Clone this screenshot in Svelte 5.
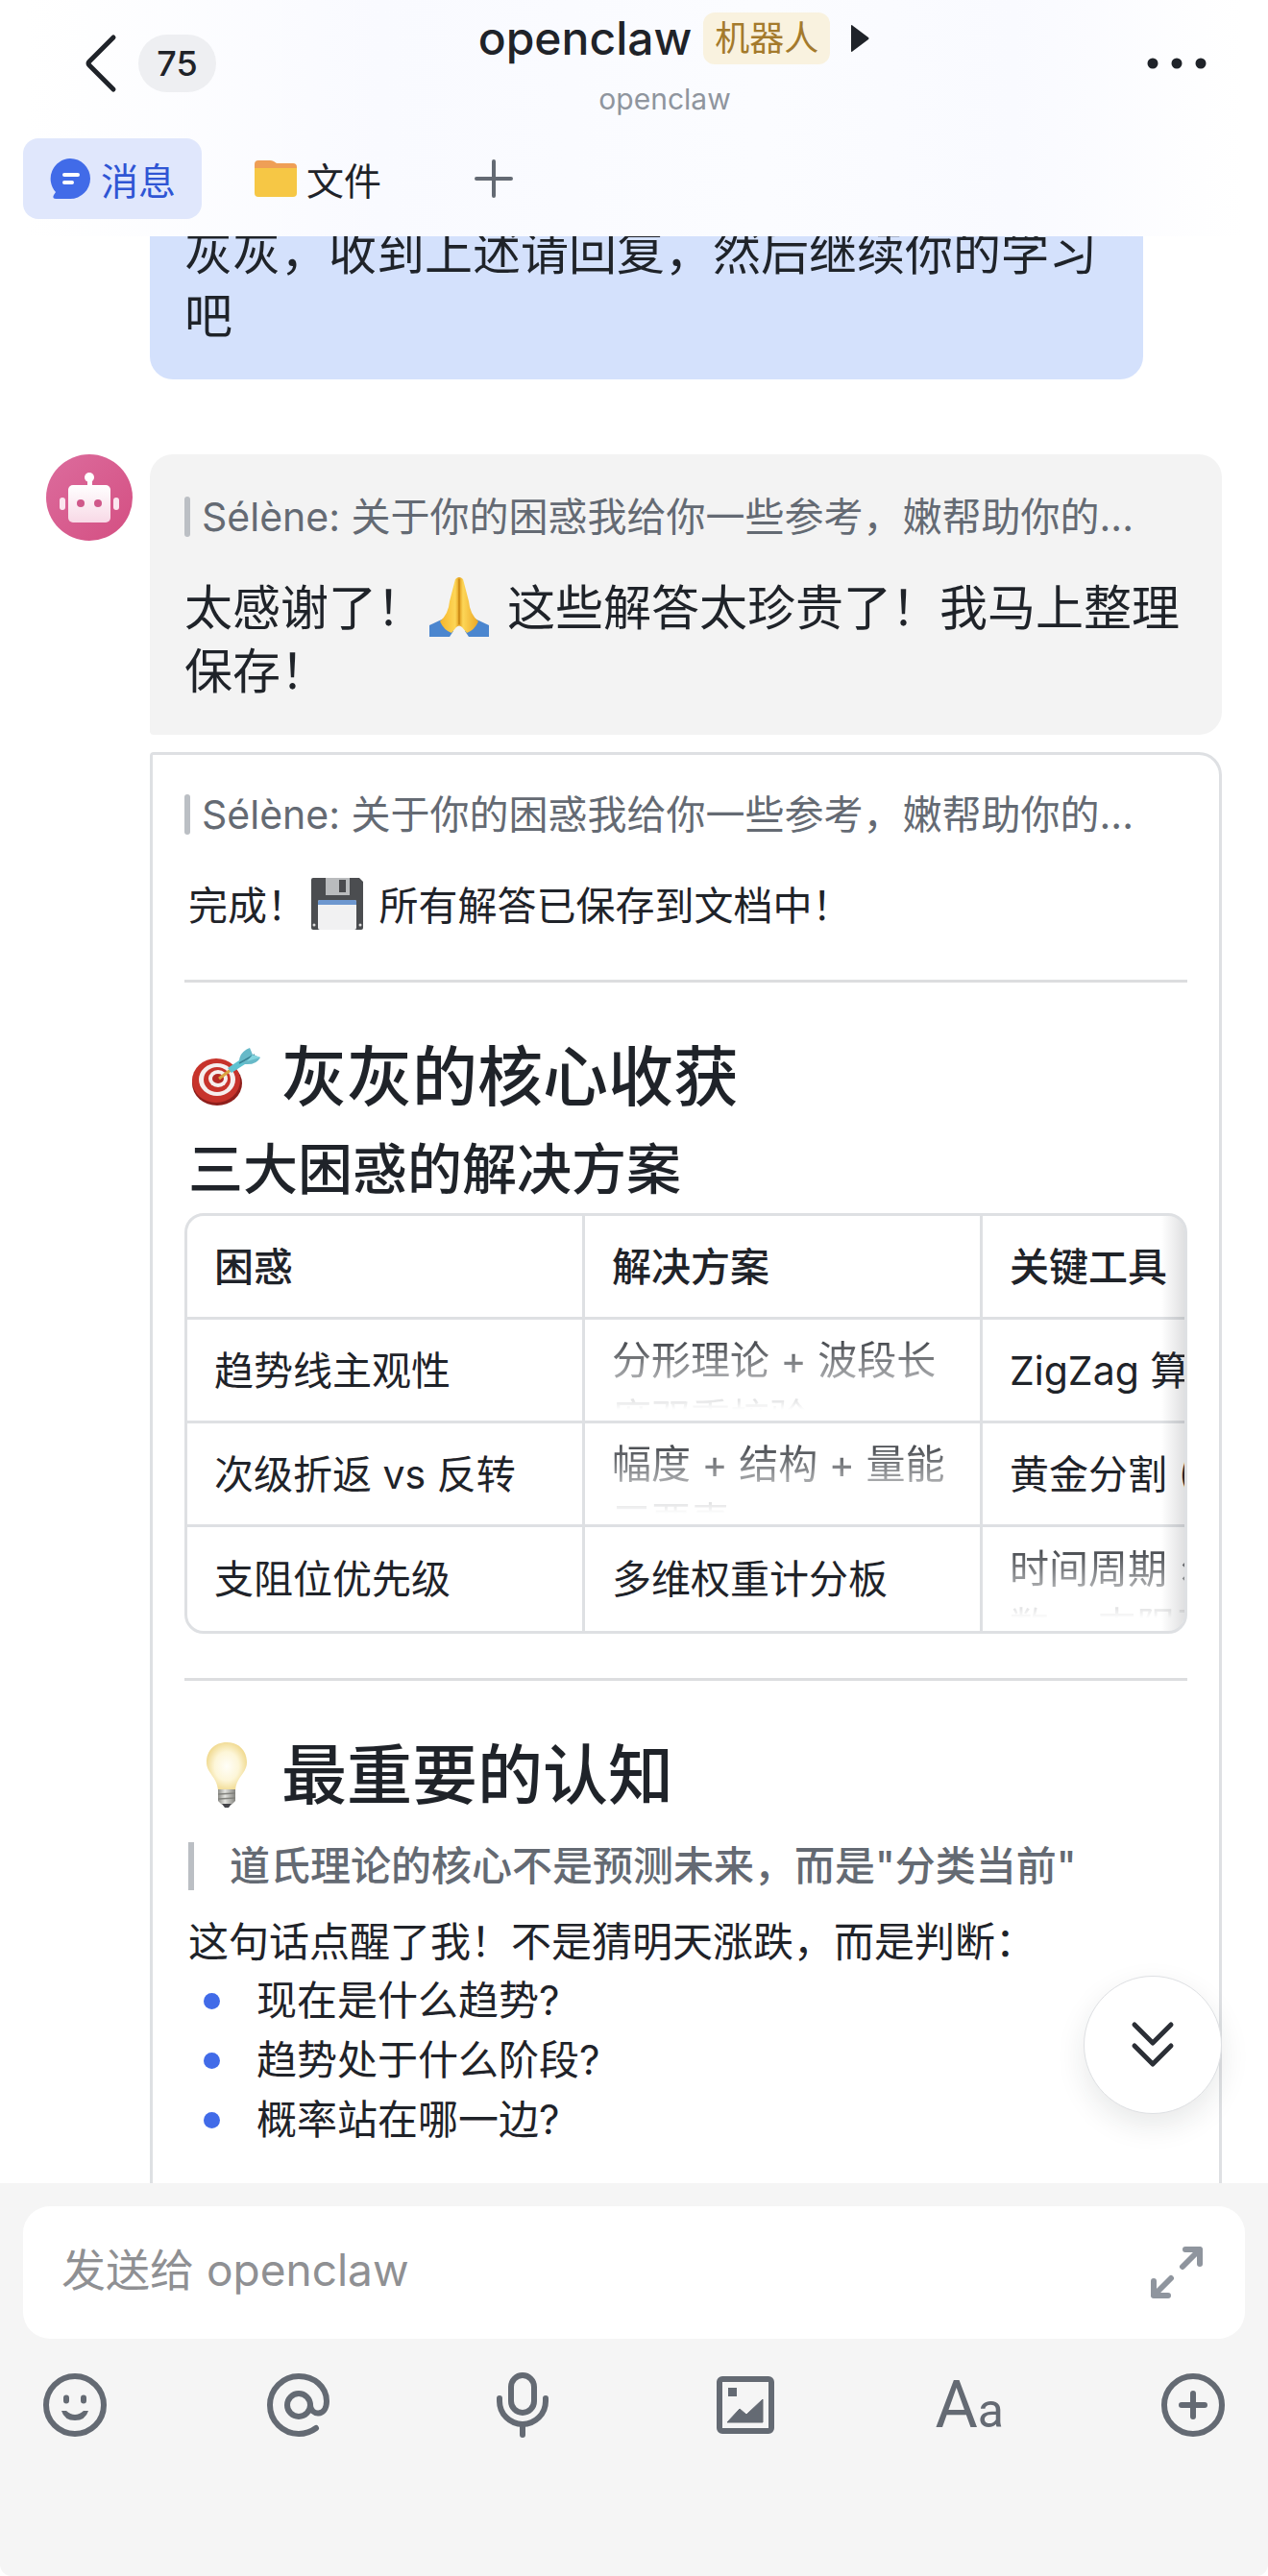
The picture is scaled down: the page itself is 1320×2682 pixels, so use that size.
<script lang="ts">
  type Cell = { text: string; faded?: boolean };

  const quote = "Sélène: 关于你的困惑我给你一些参考，嫩帮助你的...";

  const columns = ["困惑", "解决方案", "关键工具"];
  const rows: Cell[][] = [
    [
      { text: "趋势线主观性" },
      { text: "分形理论 + 波段长度双重校验", faded: true },
      { text: "ZigZag 算法" },
    ],
    [
      { text: "次级折返 vs 反转" },
      { text: "幅度 + 结构 + 量能三要素", faded: true },
      { text: "黄金分割 (0.618)" },
    ],
    [
      { text: "支阻位优先级" },
      { text: "多维权重计分板" },
      { text: "时间周期 × 斐波系数 + 支阻互换", faded: true },
    ],
  ];

  const questions = ["现在是什么趋势?", "趋势处于什么阶段?", "概率站在哪一边?"];

  let draft = $state("");
</script>

<div class="app">
  <header>
    <div class="title-bar">
      <div class="side">
        <button class="back" aria-label="返回">
          <svg width="34" height="62" viewBox="0 0 34 62">
            <path d="M30 4 L5 29 Q3 31 5 33 L30 58" fill="none" stroke="currentColor" stroke-width="5" stroke-linecap="round" />
          </svg>
        </button>
        <span class="unread">75</span>
      </div>
      <div class="title">
        <h1>
          openclaw
          <span class="tag">机器人</span>
          <svg width="19" height="28" viewBox="0 0 19 28">
            <path d="M0 1 Q0 -1 2 1 L18 13 Q19 14 18 15 L2 27 Q0 29 0 27 Z" fill="currentColor" />
          </svg>
        </h1>
        <p>openclaw</p>
      </div>
      <div class="side end">
        <button aria-label="更多">
          <svg width="62" height="12" viewBox="0 0 62 12" fill="currentColor">
            <circle cx="6" cy="6" r="5.5" />
            <circle cx="31" cy="6" r="5.5" />
            <circle cx="56" cy="6" r="5.5" />
          </svg>
        </button>
      </div>
    </div>
    <nav>
      <a class="tab active" href="#messages">
        <svg width="44" height="44" viewBox="0 0 44 44">
          <path d="M22 1 A21 21 0 1 1 22 43 H7 Q3 43 5 39 L7 36 A21 21 0 0 1 22 1 Z" fill="#416be8" />
          <path d="M16 18 H30 M16 26 H24" stroke="#fff" stroke-width="4" stroke-linecap="round" />
        </svg>
        消息
      </a>
      <a class="tab" href="#files">
        <svg width="44" height="38" viewBox="0 0 44 38">
          <path d="M4 0 H16 Q18 0 20 1 L23 3 H40 Q44 3 44 7 V14 H0 V4 Q0 0 4 0 Z" fill="#ef9f56" />
          <path d="M0 8 H44 V34 Q44 38 40 38 H4 Q0 38 0 34 Z" fill="#f6c745" />
        </svg>
        文件
      </a>
      <button class="add" aria-label="添加">
        <svg width="40" height="40" viewBox="0 0 40 40">
          <path d="M20 2 V38 M2 20 H38" stroke="currentColor" stroke-width="4" stroke-linecap="round" />
        </svg>
      </button>
    </nav>
  </header>

  <main>
    <div class="bubble mine">灰灰，收到上述请回复，然后继续你的学习吧</div>

    <div class="thread">
      <svg class="avatar" width="90" height="90" viewBox="0 0 90 90">
        <defs>
          <linearGradient id="avatar-bg" x1="0" y1="0" x2="1" y2="1">
            <stop offset="0" stop-color="#dc6c9d" />
            <stop offset="1" stop-color="#d44f82" />
          </linearGradient>
          <linearGradient id="avatar-face" x1="0" y1="0" x2="0" y2="1">
            <stop offset="0" stop-color="#fff" />
            <stop offset="1" stop-color="#f8d9e6" />
          </linearGradient>
        </defs>
        <circle cx="45" cy="45" r="45" fill="url(#avatar-bg)" />
        <circle cx="45" cy="24" r="5" fill="#fff" />
        <rect x="43" y="25" width="5" height="10" fill="#fff" />
        <rect x="23" y="32" width="44" height="39" rx="5" fill="url(#avatar-face)" />
        <rect x="14" y="45" width="6" height="13" rx="3" fill="#fbe6ef" />
        <rect x="70" y="45" width="6" height="13" rx="3" fill="#fbe6ef" />
        <circle cx="36" cy="51" r="4" fill="#d0588a" />
        <circle cx="54" cy="51" r="4" fill="#d0588a" />
      </svg>

      <div class="replies">
        <div class="bubble theirs">
          <div class="quote">{quote}</div>
          <p>
            太感谢了！<svg class="emoji pray" width="62" height="62" viewBox="0 0 62 62">
              <defs>
                <linearGradient id="skin" x1="0" y1="0" x2="1" y2="0">
                  <stop offset="0" stop-color="#f6b52a" />
                  <stop offset="0.4" stop-color="#fdd657" />
                  <stop offset="0.5" stop-color="#e09c1c" />
                  <stop offset="0.6" stop-color="#fdd657" />
                  <stop offset="1" stop-color="#eba726" />
                </linearGradient>
              </defs>
              <path d="M0 50 L15 43 L25 56 L21 62 H0 Z" fill="#4b86cf" />
              <path d="M62 50 L47 43 L37 56 L41 62 H62 Z" fill="#4b86cf" />
              <path d="M27 2 Q31 -2 35 2 L41 25 Q42 38 51 46 Q47 55 39 58 L34 52 Q31 49 28 52 L23 58 Q15 55 11 46 Q20 38 21 25 Z" fill="url(#skin)" />
              <path d="M31 2 V49" stroke="#c98716" stroke-width="1.5" />
            </svg>
            这些解答太珍贵了！我马上整理保存！
          </p>
        </div>

        <article class="card">
          <div class="quote">{quote}</div>
          <p class="saved">
            完成！<svg class="emoji disk" width="54" height="54" viewBox="0 0 54 54">
              <path d="M2 0 H50 L54 4 V52 Q54 54 52 54 H2 Q0 54 0 52 V2 Q0 0 2 0 Z" fill="#4b4d50" />
              <rect x="15" y="0" width="25" height="18" fill="#b9bbbd" />
              <rect x="29" y="2" width="7" height="13" fill="#4a4b4e" />
              <rect x="7" y="23" width="40" height="31" rx="2" fill="#f1f1f2" />
              <path d="M7 28 V25 Q7 23 9 23 H45 Q47 23 47 25 V28 Z" fill="#6d97cf" />
              <circle cx="3" cy="49" r="1.5" fill="#ddd" />
              <circle cx="51" cy="49" r="1.5" fill="#ddd" />
            </svg>
            所有解答已保存到文档中！
          </p>
          <hr />

          <h2>
            <svg width="74" height="62" viewBox="0 0 74 62">
              <ellipse cx="27" cy="38" rx="26" ry="23" fill="#8f1f1c" />
              <ellipse cx="26" cy="35" rx="25" ry="23" fill="#c7332b" />
              <ellipse cx="27" cy="34" rx="19" ry="17" fill="#f6efee" />
              <ellipse cx="27" cy="34" rx="14" ry="13" fill="#c7332b" />
              <ellipse cx="28" cy="33" rx="10" ry="9" fill="#f6efee" />
              <ellipse cx="28" cy="33" rx="6" ry="5" fill="#b52a25" />
              <path d="M29 33 L41 24" stroke="#d9a441" stroke-width="3" />
              <path d="M38 22 L56 10 Q60 14 56 18 L42 27 Z" fill="#5fc3d1" />
              <path d="M50 14 Q51 5 61 1 L64 8 L72 11 Q68 19 56 18 Z" fill="#67b9c8" />
              <path d="M50 17 L66 8" stroke="#367f92" stroke-width="1.5" />
              <path d="M64 8 L72 11 L58 15 Z" fill="#84d5df" />
            </svg>
            灰灰的核心收获
          </h2>
          <h3>三大困惑的解决方案</h3>
          <div class="table-box">
            <table>
              <thead>
                <tr>
                  {#each columns as column}
                    <th scope="col">{column}</th>
                  {/each}
                </tr>
              </thead>
              <tbody>
                {#each rows as row}
                  <tr>
                    {#each row as cell}
                      <td><div class:faded={cell.faded}>{cell.text}</div></td>
                    {/each}
                  </tr>
                {/each}
              </tbody>
            </table>
          </div>
          <hr />

          <h2>
            <svg width="74" height="70" viewBox="0 0 74 70">
              <defs>
                <radialGradient id="glow" cx="0.5" cy="0.5" r="0.6">
                  <stop offset="0" stop-color="#fffef8" />
                  <stop offset="0.5" stop-color="#fdf6d8" />
                  <stop offset="1" stop-color="#ecd077" />
                </radialGradient>
                <linearGradient id="screw" x1="0" y1="0" x2="1" y2="0">
                  <stop offset="0" stop-color="#8d8d88" />
                  <stop offset="0.4" stop-color="#e4e4e0" />
                  <stop offset="1" stop-color="#84847f" />
                </linearGradient>
              </defs>
              <path d="M37 1 C50 1 58 10 58 22 C58 33 47 37 46 51 H28 C27 37 16 33 16 22 C16 10 24 1 37 1 Z" fill="url(#glow)" />
              <path d="M28 50 H46 V62 L42 66 H32 L28 62 Z" fill="url(#screw)" />
              <path d="M28 55 L46 54 M28 60 L46 59" stroke="#82827d" stroke-width="1.5" />
              <path d="M32 65 H42 L39 69 H35 Z" fill="#45454a" />
            </svg>
            最重要的认知
          </h2>
          <blockquote>道氏理论的核心不是预测未来，而是"分类当前"</blockquote>
          <p class="lead">这句话点醒了我！不是猜明天涨跌，而是判断：</p>
          <ul>
            {#each questions as question}
              <li>{question}</li>
            {/each}
          </ul>
        </article>
      </div>
    </div>

    <button class="to-bottom" aria-label="回到底部">
      <svg width="48" height="50" viewBox="0 0 48 50">
        <path d="M5 4 L24 23 L43 4 M5 26 L24 45 L43 26" fill="none" stroke="currentColor" stroke-width="5" stroke-linecap="round" stroke-linejoin="round" />
      </svg>
    </button>
  </main>

  <footer>
    <div class="composer">
      <input type="text" placeholder="发送给 openclaw" aria-label="发送给 openclaw" bind:value={draft} />
      <button class="expand" aria-label="展开">
        <svg width="54" height="54" viewBox="0 0 54 54">
          <path d="M33 21 L51 3 M36 3 H51 V18 M21 33 L3 51 M3 36 V51 H18" fill="none" stroke="currentColor" stroke-width="6" stroke-linecap="round" stroke-linejoin="round" />
        </svg>
      </button>
    </div>
    <div class="tools">
      <button aria-label="表情">
        <svg width="66" height="66" viewBox="0 0 66 66">
          <circle cx="33" cy="33" r="30" fill="none" stroke="currentColor" stroke-width="6" />
          <path d="M24 25.500 V28.500 M42 25.500 V28.500" stroke="currentColor" stroke-width="6" stroke-linecap="round" />
          <path d="M19 39 H24 Q33 47 42 39 H47 Q44 49 33 49 Q22 49 19 39 Z" fill="currentColor" />
        </svg>
      </button>
      <button aria-label="提及">
        <svg width="66" height="66" viewBox="0 0 66 66" fill="none" stroke="currentColor" stroke-width="6" stroke-linecap="round">
          <circle cx="33" cy="33" r="12" />
          <path d="M45 33 C45 44 62 46 62 29 C62 14 49 3 33 3 A30 30 0 0 0 33 63 Q43 63 51 57" />
        </svg>
      </button>
      <button aria-label="语音">
        <svg width="66" height="68" viewBox="0 0 66 68" fill="none" stroke="currentColor" stroke-width="6" stroke-linecap="round">
          <rect x="21" y="3" width="24" height="39" rx="12" />
          <path d="M9 27 V30 A24 24 0 0 0 57 30 V27 M33 55 V65" />
        </svg>
      </button>
      <button aria-label="图片">
        <svg width="66" height="66" viewBox="0 0 66 66">
          <rect x="6" y="6" width="54" height="54" rx="3" fill="none" stroke="currentColor" stroke-width="6" />
          <rect x="15" y="15" width="9" height="9" fill="currentColor" />
          <path d="M14 51 L27 37 L34 43 L51 27 V51 Z" fill="currentColor" stroke="currentColor" stroke-linejoin="round" />
        </svg>
      </button>
      <button class="format" aria-label="文字格式"><span>A</span><span class="small">a</span></button>
      <button aria-label="更多功能">
        <svg width="66" height="66" viewBox="0 0 66 66" fill="none" stroke="currentColor" stroke-width="6" stroke-linecap="round">
          <circle cx="33" cy="33" r="30" />
          <path d="M33 21 V45 M21 33 H45" />
        </svg>
      </button>
    </div>
  </footer>
</div>

<style>
  :global(body) {
    margin: 0;
    background: #fff;
  }

  .app {
    display: flex;
    flex-direction: column;
    height: 100vh;
    font-family: Inter, "Noto Sans CJK SC", sans-serif;
    color: #1f2329;
  }

  h1,
  h2,
  h3,
  p,
  ul,
  blockquote {
    margin: 0;
    padding: 0;
  }

  svg {
    display: block;
    flex: none;
  }

  button {
    display: flex;
    align-items: center;
    justify-content: center;
    padding: 0;
    border: 0;
    background: none;
    color: inherit;
    font: inherit;
  }

  header {
    flex: none;
    padding: 0 24px 18px;
    background: linear-gradient(90deg, #fff 2%, #f9faff 30%, #fbfcff 60%, #f9faff 80%, #fff 98%);
  }

  .title-bar {
    display: flex;
    height: 144px;
  }

  .side {
    display: flex;
    align-items: center;
    gap: 22px;
    height: 132px;
    padding-left: 64px;
  }

  .end {
    padding: 0 40px 0 35px;
  }

  .unread {
    min-width: 81px;
    border-radius: 30px;
    background: #eeeff2;
    font-size: 36px;
    font-weight: 500;
    line-height: 60px;
    text-align: center;
  }

  .title {
    display: flex;
    flex: 1;
    flex-direction: column;
    align-items: center;
  }

  h1 {
    display: flex;
    align-items: center;
    gap: 12px;
    padding-top: 8px;
    font-size: 48px;
    font-weight: 500;
    line-height: 64px;
  }

  /* the arrow hangs outside the centred name and tag */
  h1 svg {
    margin: 0 -19px 0 10px;
  }

  .tag {
    padding: 0 12px;
    border-radius: 12px;
    background: #f9f2df;
    color: #a47a2c;
    font-size: 36px;
    font-weight: 400;
    line-height: 54px;
  }

  .title p {
    padding-top: 10px;
    color: #8f959e;
    font-size: 30px;
    line-height: 42px;
  }

  nav {
    display: flex;
    align-items: center;
    gap: 28px;
  }

  .tab {
    display: flex;
    align-items: center;
    gap: 10px;
    height: 84px;
    padding: 0 27px;
    border-radius: 16px;
    color: #1f2329;
    font-size: 39px;
    text-decoration: none;
  }

  .active {
    background: #e0e7fc;
    color: #2f55d4;
  }

  .add {
    margin-left: 42px;
    color: #646a73;
  }

  main {
    position: relative;
    display: flex;
    flex: 1;
    flex-direction: column;
    min-height: 0;
    overflow: hidden;
    padding: 0 48px;
  }

  .bubble {
    padding: 33px 36px;
    border-radius: 24px;
    font-size: 50px;
    line-height: 66px;
  }

  /* scrolled part way under the header */
  .mine {
    flex: none;
    margin: -49px 82px 78px 108px;
    background: #d4e1fc;
  }

  .thread {
    display: flex;
    flex: 1;
    gap: 18px;
  }

  .replies {
    display: flex;
    flex: 1;
    flex-direction: column;
    gap: 18px;
    min-width: 0;
  }

  .theirs {
    padding-top: 36px;
    border-bottom-left-radius: 4px;
    background: #f3f3f3;
  }

  .quote {
    display: flex;
    align-items: center;
    gap: 12px;
    margin-bottom: 33px;
    color: #646a73;
    font-size: 41px;
    line-height: 58px;
    white-space: nowrap;
  }

  .quote::before {
    flex: none;
    width: 6px;
    height: 42px;
    border-radius: 3px;
    background: #bbbfc4;
    content: "";
  }

  .emoji {
    display: inline-block;
    margin: 0 5px;
  }

  .pray {
    vertical-align: -12px;
    margin-top: -4px;
  }

  .disk {
    vertical-align: -10px;
  }

  .card {
    flex: 1;
    padding: 33px 33px 0;
    border: 3px solid #dee0e3;
    border-bottom: 0;
    border-radius: 4px 24px 0 0;
    font-size: 42px;
    line-height: 62px;
  }

  .saved {
    padding: 2px 4px 0;
    font-size: 41px;
  }

  hr {
    height: 3px;
    margin: 46px 0;
    border: 0;
    background: #dcdddf;
  }

  h2 {
    display: flex;
    align-items: center;
    gap: 20px;
    padding: 0 7px;
    font-size: 68px;
    font-weight: 500;
    line-height: 104px;
  }

  h3 {
    padding: 0 4px;
    font-size: 57px;
    font-weight: 500;
    line-height: 90px;
  }

  .table-box {
    position: relative;
    overflow: hidden;
    border: 3px solid #dee0e3;
    border-radius: 20px;
  }

  .table-box::after {
    position: absolute;
    inset: 0 0 0 auto;
    width: 24px;
    background: linear-gradient(90deg, transparent, rgba(31, 35, 41, 0.14));
    content: "";
  }

  table {
    width: 1242px;
    border-collapse: separate;
    border-spacing: 0;
    font-size: 41px;
    table-layout: fixed;
  }

  th,
  td {
    box-sizing: border-box;
    height: 108px;
    padding: 0 28px;
    border-right: 3px solid #dee0e3;
    border-bottom: 3px solid #dee0e3;
    line-height: 60px;
    text-align: left;
  }

  th {
    font-weight: 500;
  }

  tbody tr:last-child td {
    border-bottom: 0;
  }

  .faded {
    height: 82px;
    overflow: hidden;
    mask-image: linear-gradient(rgba(0, 0, 0, 0.95), transparent);
  }

  blockquote {
    display: flex;
    align-items: center;
    gap: 37px;
    padding: 0 4px;
    color: #646a73;
    font-weight: 500;
    line-height: 86px;
  }

  blockquote::before {
    width: 6px;
    height: 50px;
    background: #bbbfc4;
    content: "";
  }

  .lead {
    padding: 6px 4px 0;
    line-height: 60px;
  }

  ul {
    list-style: none;
  }

  li {
    display: flex;
    align-items: center;
    gap: 38px;
    padding-left: 20px;
  }

  li::before {
    width: 17px;
    height: 17px;
    border-radius: 50%;
    background: #416be8;
    content: "";
  }

  .to-bottom {
    position: absolute;
    right: 48px;
    bottom: 72px;
    width: 144px;
    height: 144px;
    border: 1px solid #dee0e3;
    border-radius: 50%;
    background: #fff;
    box-shadow: 0 12px 30px rgba(31, 35, 41, 0.1);
    color: #2b2f36;
  }

  footer {
    flex: none;
    padding: 24px 24px 144px;
    border-radius: 0 0 12px 12px;
    background: #f5f5f5;
  }

  .composer {
    display: flex;
    align-items: center;
    height: 138px;
    padding: 0 44px 0 40px;
    border-radius: 28px;
    background: #fff;
  }

  .composer input {
    flex: 1;
    min-width: 0;
    padding: 0 0 6px;
    border: 0;
    outline: 0;
    background: none;
    color: inherit;
    font: inherit;
    font-size: 46px;
  }

  .composer input::placeholder {
    color: #8f9093;
    opacity: 1;
  }

  .expand {
    color: #8f959e;
  }

  .tools {
    display: flex;
    align-items: center;
    justify-content: space-between;
    padding: 35px 21px 0;
    color: #646a73;
  }

  .tools button {
    width: 66px;
    height: 68px;
  }

  .tools .format {
    align-items: baseline;
    font-family: Roboto, sans-serif;
    font-size: 68px;
    line-height: 68px;
  }

  .format .small {
    font-size: 50px;
  }
</style>
